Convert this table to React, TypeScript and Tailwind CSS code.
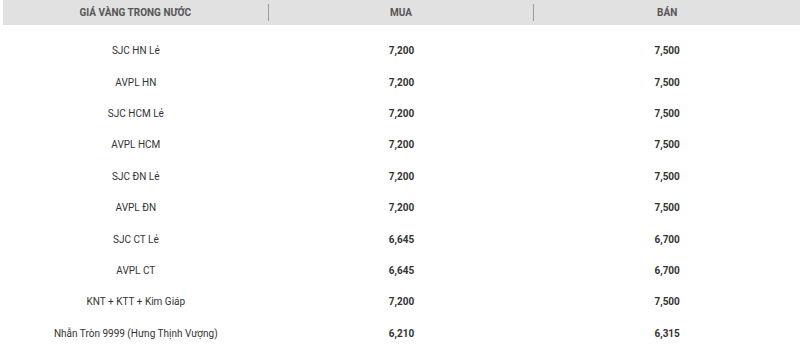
import React from 'react';

const rows = [
  { name: 'SJC HN Lẻ', buy: '7,200', sell: '7,500' },
  { name: 'AVPL HN', buy: '7,200', sell: '7,500' },
  { name: 'SJC HCM Lẻ', buy: '7,200', sell: '7,500' },
  { name: 'AVPL HCM', buy: '7,200', sell: '7,500' },
  { name: 'SJC ĐN Lẻ', buy: '7,200', sell: '7,500' },
  { name: 'AVPL ĐN', buy: '7,200', sell: '7,500' },
  { name: 'SJC CT Lẻ', buy: '6,645', sell: '6,700' },
  { name: 'AVPL CT', buy: '6,645', sell: '6,700' },
  { name: 'KNT + KTT + Kim Giáp', buy: '7,200', sell: '7,500' },
  { name: 'Nhẫn Tròn 9999 (Hưng Thịnh Vượng)', buy: '6,210', sell: '6,315' },
];

export default function App() {
  return (
    <div className="w-[800px] h-[351px] bg-white pl-[3px] overflow-hidden" style={{ fontFamily: 'Roboto, "Liberation Sans", sans-serif' }}>
      {/* header */}
      <div className="grid grid-cols-3 h-[25px] bg-[#e1e1e1] text-[10px] font-bold text-[#555]">
        <div className="flex items-center justify-center border-r border-[#9a9a9a] my-[4px]">GIÁ VÀNG TRONG NƯỚC</div>
        <div className="flex items-center justify-center border-r border-[#9a9a9a] my-[4px]">MUA</div>
        <div className="flex items-center justify-center">BÁN</div>
      </div>

      <div className="pt-[10px]">
        {rows.map((r, i) => (
          <div key={i} className="grid grid-cols-3 h-[31.4px] items-center text-[10px] text-[#333]">
            <div className="text-center">{r.name}</div>
            <div className="text-center font-bold">{r.buy}</div>
            <div className="text-center font-bold">{r.sell}</div>
          </div>
        ))}
      </div>
    </div>
  );
}
